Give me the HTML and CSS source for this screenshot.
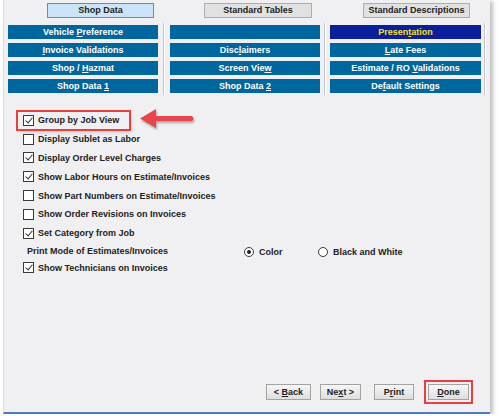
FILE: index.html
```html
<!DOCTYPE html>
<html lang="en">
<head>
    <meta charset="UTF-8">
    <title>Shop Data</title>
    <link rel="stylesheet" href="styles.css">
</head>
<body>
    <div class="window">
        <div class="tabs">
            <div class="tab active">Shop Data</div>
            <div class="tab t2">Standard Tables</div>
            <div class="tab t3">Standard Descriptions</div>
        </div>

        <div class="menu">
            <div class="col c1">
                <div class="mbtn">Vehicle <u>P</u>reference</div>
                <div class="mbtn"><u>I</u>nvoice Validations</div>
                <div class="mbtn">Shop / <u>H</u>azmat</div>
                <div class="mbtn">Shop Data <u>1</u></div>
            </div>
            <div class="col c2">
                <div class="mbtn"></div>
                <div class="mbtn">Disc<u>l</u>aimers</div>
                <div class="mbtn">Screen Vie<u>w</u></div>
                <div class="mbtn">Shop Data <u>2</u></div>
            </div>
            <div class="col c3">
                <div class="mbtn sel">Presen<u>t</u>ation</div>
                <div class="mbtn"><u>L</u>ate Fees</div>
                <div class="mbtn">Estimate / RO <u>V</u>alidations</div>
                <div class="mbtn">De<u>f</u>ault Settings</div>
            </div>
        </div>

        <div class="options">
            <div class="opt"><span class="hl"><span class="cb on"></span>Group by Job View</span></div>
            <div class="opt"><span class="cb"></span>Display Sublet as Labor</div>
            <div class="opt"><span class="cb on"></span>Display Order Level Charges</div>
            <div class="opt"><span class="cb on"></span>Show Labor Hours on Estimate/Invoices</div>
            <div class="opt"><span class="cb"></span>Show Part Numbers on Estimate/Invoices</div>
            <div class="opt"><span class="cb"></span>Show Order Revisions on Invoices</div>
            <div class="opt"><span class="cb on"></span>Set Category from Job</div>
            <div class="opt mode">
                <span class="mode-label">Print Mode of Estimates/Invoices</span>
                <span class="radio-item first"><span class="rb on"></span>Color</span>
                <span class="radio-item"><span class="rb"></span>Black and White</span>
            </div>
            <div class="opt"><span class="cb on"></span>Show Technicians on Invoices</div>
        </div>

        <svg class="arrow" width="64" height="26" viewBox="0 0 64 26">
            <path d="M4 11.5 L20 2 L20 9 L56 9 Q59 11.5 56 14 L20 14 L20 21 Z" fill="#e8464a"/>
        </svg>

        <div class="actions">
            <div class="btn back">&lt; <u>B</u>ack</div>
            <div class="btn next">Ne<u>x</u>t &gt;</div>
            <div class="btn print">P<u>r</u>int</div>
            <div class="btn done"><u>D</u>one</div>
        </div>
    </div>
</body>
</html>
```

FILE: styles.css
```css
*{
    margin: 0;
    padding: 0;
    box-sizing: border-box;
}
body{
    background: #fff;
    font-family: "Liberation Sans", Arial, sans-serif;
    font-weight: bold;
    font-size: 9px;
    color: #222;
}
.window{
    position: relative;
    margin-left: 3px;
    width: 487px;
    height: 414px;
    background: #f0eff2;
    border-left: 1px solid #dcdcdc;
    border-bottom: 2px solid #4d7bbf;
    box-shadow: 3px 1px 4px rgba(0,0,0,0.25);
    display: flex;
    flex-direction: column;
}
/* top tabs */
.tabs{
    display: flex;
    padding: 3px 0 0 43px;
}
.tab{
    width: 107px;
    height: 15px;
    line-height: 13px;
    text-align: center;
    background: #e1e1e1;
    border: 1px solid #adadad;
}
.tab.active{
    background: #cce4f7;
    border-color: #5b8ec2;
}
.t2{
    margin-left: 50px;
    width: 108px;
}
.t3{
    margin-left: 51px;
}
/* blue menu buttons */
.menu{
    display: flex;
    margin-top: 5px;
    padding-left: 4px;
}
.col{
    display: flex;
    flex-direction: column;
    gap: 4px;
    padding: 2px 5px 2px 0;
    border-right: 1px solid #c6c6ca;
    box-shadow: 1px 0 0 #fff;
}
.c2{
    padding-left: 6px;
    padding-right: 4px;
}
.c3{
    padding-left: 5px;
    padding-right: 3px;
}
.mbtn{
    width: 150px;
    height: 14px;
    line-height: 14px;
    text-align: center;
    color: #fff;
    background: #00669e;
}
.c3 .mbtn{
    width: 151px;
}
.mbtn.sel{
    background: #0b1e9c;
    color: #f3e32a;
}
/* options */
.options{
    margin-top: 16px;
    padding-left: 19px;
}
.opt{
    display: flex;
    align-items: center;
    height: 18.8px;
    gap: 4px;
    white-space: nowrap;
}
.hl{
    display: flex;
    align-items: center;
    gap: 4px;
    padding: 3px 10px 3px 5px;
    margin: -3px -10px -3px -5px;
    outline: 2.5px solid #e8403f;
    box-shadow: 2px 3px 4px rgba(0,0,0,0.2);
}
.cb{
    position: relative;
    width: 11px;
    height: 11px;
    border: 1px solid #3a3a3a;
    background: #fff;
    flex: none;
}
.cb.on::after{
    content: "";
    position: absolute;
    left: 3px;
    top: 0px;
    width: 3px;
    height: 6px;
    border-right: 1px solid #333;
    border-bottom: 1px solid #333;
    transform: rotate(40deg);
}
.mode{
    height: 16px;
}
.mode-label{
    width: 217px;
    padding-left: 4px;
    flex: none;
}
.radio-item{
    display: flex;
    align-items: center;
    gap: 5px;
    flex: none;
    margin-top: 3px;
}
.radio-item.first{
    width: 70px;
}
.rb{
    position: relative;
    width: 10px;
    height: 10px;
    border: 1px solid #3a3a3a;
    border-radius: 50%;
    background: #fff;
    flex: none;
}
.rb.on::after{
    content: "";
    position: absolute;
    left: 2px;
    top: 2px;
    width: 4px;
    height: 4px;
    border-radius: 50%;
    background: #222;
}
.arrow{
    position: absolute;
    left: 132px;
    top: 107px;
    filter: drop-shadow(1px 2px 1px rgba(0,0,0,0.3));
}
/* bottom buttons */
.actions{
    margin-top: auto;
    display: flex;
    justify-content: flex-end;
    padding: 0 21px 12px 0;
}
.btn{
    height: 16px;
    line-height: 14px;
    text-align: center;
    border: 1px solid #a3a3a3;
    background: linear-gradient(#f6f6f6, #dedede);
}
.back{
    width: 45px;
}
.next{
    width: 41px;
    margin-left: 9px;
}
.print{
    width: 40px;
    margin-left: 13px;
}
.done{
    width: 41px;
    margin-left: 14px;
    outline: 2.5px solid #e8403f;
    outline-offset: 2px;
}
```
